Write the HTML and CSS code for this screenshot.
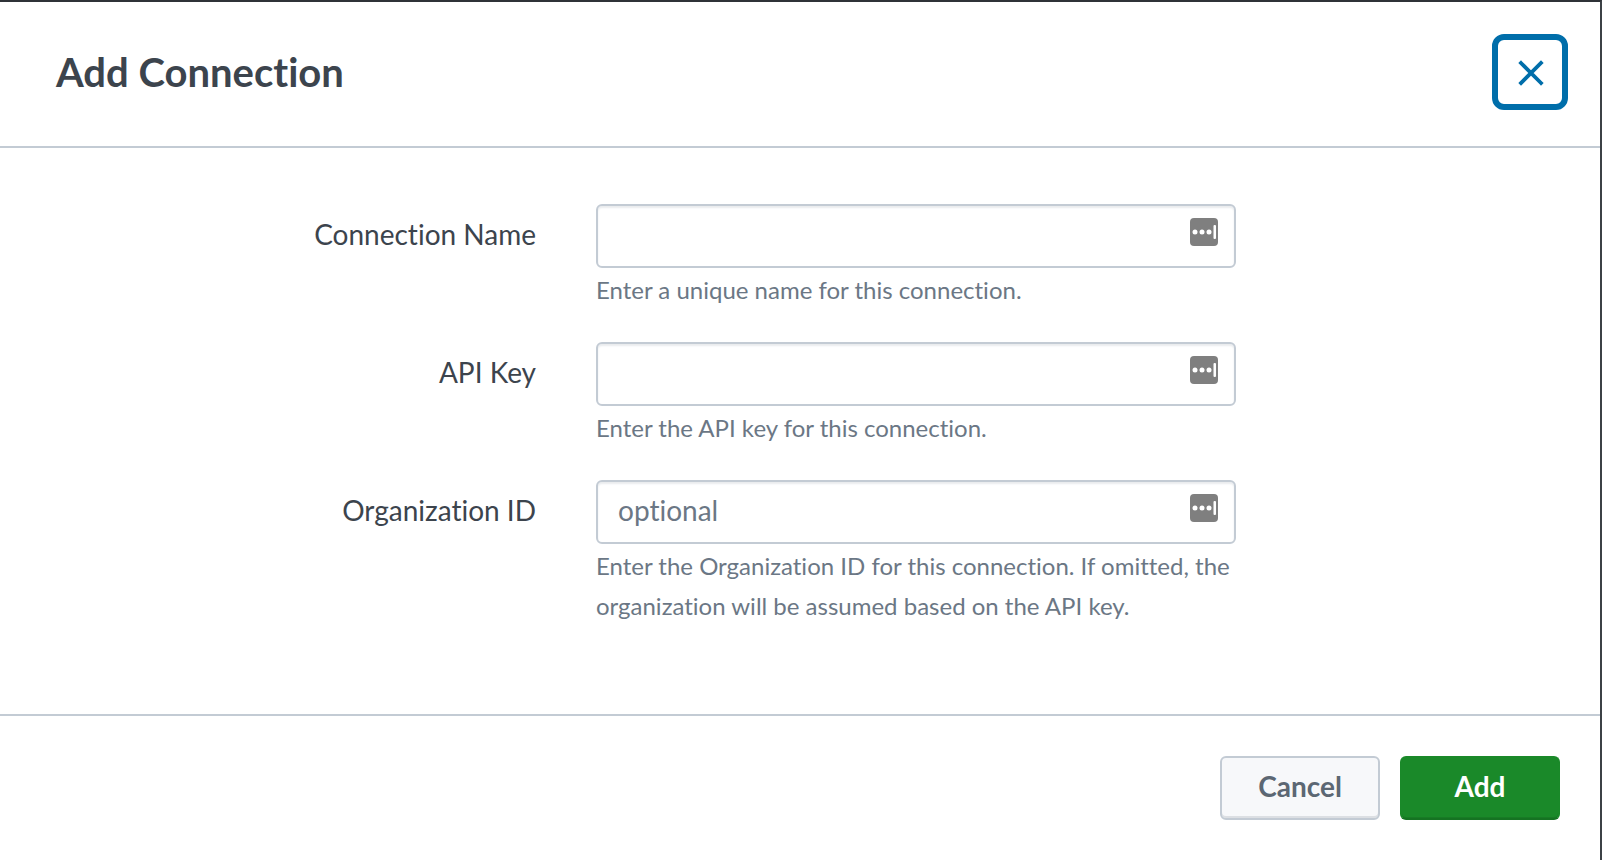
FILE: index.html
```html
<!DOCTYPE html>
<html lang="en">
<head>
<meta charset="utf-8">
<meta name="viewport" content="width=device-width, initial-scale=1">
<title>Add Connection</title>
<link rel="stylesheet" href="styles.css">
</head>
<body>
<form class="modal" aria-labelledby="modal-title">
  <header class="modal-header">
    <h1 class="modal-title" id="modal-title">Add Connection</h1>
    <button class="close" type="button" aria-label="Close">
      <svg class="close-icon" viewBox="0 0 26 26" aria-hidden="true"><path d="M3 3L23 23M23 3L3 23" fill="none" stroke="currentColor" stroke-width="3.800" stroke-linecap="square"/></svg>
    </button>
  </header>
  <main class="modal-body">
    <div class="field">
      <label class="label" for="name">Connection Name</label>
      <div class="control">
        <div class="input-wrap">
          <input class="input" id="name" type="text" aria-describedby="name-help">
          <svg class="fill-icon" viewBox="0 0 28 28" aria-hidden="true"><rect width="28" height="28" rx="4" fill="#7f7f7f"/><g fill="#fff"><circle cx="5" cy="14" r="2.500"/><circle cx="12" cy="14" r="2.500"/><circle cx="19" cy="14" r="2.500"/><rect x="23.500" y="7" width="2.500" height="14" rx="1"/></g></svg>
        </div>
        <p class="help" id="name-help">Enter a unique name for this connection.</p>
      </div>
    </div>
    <div class="field">
      <label class="label" for="key">API Key</label>
      <div class="control">
        <div class="input-wrap">
          <input class="input" id="key" type="text" aria-describedby="key-help">
          <svg class="fill-icon" viewBox="0 0 28 28" aria-hidden="true"><rect width="28" height="28" rx="4" fill="#7f7f7f"/><g fill="#fff"><circle cx="5" cy="14" r="2.500"/><circle cx="12" cy="14" r="2.500"/><circle cx="19" cy="14" r="2.500"/><rect x="23.500" y="7" width="2.500" height="14" rx="1"/></g></svg>
        </div>
        <p class="help" id="key-help">Enter the API key for this connection.</p>
      </div>
    </div>
    <div class="field">
      <label class="label" for="org">Organization ID</label>
      <div class="control">
        <div class="input-wrap">
          <input class="input" id="org" type="text" placeholder="optional" aria-describedby="org-help">
          <svg class="fill-icon" viewBox="0 0 28 28" aria-hidden="true"><rect width="28" height="28" rx="4" fill="#7f7f7f"/><g fill="#fff"><circle cx="5" cy="14" r="2.500"/><circle cx="12" cy="14" r="2.500"/><circle cx="19" cy="14" r="2.500"/><rect x="23.500" y="7" width="2.500" height="14" rx="1"/></g></svg>
        </div>
        <p class="help" id="org-help">Enter the Organization ID for this connection. If omitted, the organization will be assumed based on the API key.</p>
      </div>
    </div>
  </main>
  <footer class="modal-footer">
    <button class="button" type="button">Cancel</button>
    <button class="button button-primary" type="submit">Add</button>
  </footer>
</form>
</body>
</html>
```
FILE: styles.css
```css
* {
  box-sizing: border-box;
}

body {
  margin: 0;
  font-family: Lato, "Liberation Sans", sans-serif;
  font-size: 28px;
  font-variant-ligatures: none;
  color: #3c444d;
  background: #fff;
}

.modal {
  display: flex;
  flex-direction: column;
  min-height: 100vh;
  border-top: 2px solid #2f3338;
  border-right: 2px solid #3c4146;
}

.modal-header {
  display: flex;
  align-items: center;
  justify-content: space-between;
  padding: 32px 32px 36px 56px;
  border-bottom: 2px solid #c3cbd4;
}

.modal-title {
  margin: 0;
  font-size: 40px;
  line-height: 48px;
  font-weight: 700;
}

.close {
  display: flex;
  align-items: center;
  justify-content: center;
  width: 76px;
  height: 76px;
  padding: 2px 0 0 2px;
  color: #006eaa;
  background: #fff;
  border: 6px solid #006eaa;
  border-radius: 12px;
}

.close-icon {
  width: 26px;
  height: 26px;
}

.modal-body {
  display: flex;
  flex-direction: column;
  gap: 32px;
  padding: 56px 0 88px;
}

.field {
  display: grid;
  grid-template-columns: 33.5% 40%;
  column-gap: 60px;
}

.label {
  line-height: 60px;
  text-align: right;
}

.input-wrap {
  position: relative;
}

.input {
  display: block;
  width: 100%;
  height: 64px;
  padding: 0 64px 4px 20px;
  font: inherit;
  font-variant-ligatures: none;
  color: inherit;
  background: #fff;
  border: 2px solid #c3cbd4;
  border-radius: 6px;
  box-shadow: inset 0 2px 2px #e9ebee;
}

.input::placeholder {
  color: #6b7785;
  opacity: 1;
}

.fill-icon {
  position: absolute;
  top: 14px;
  right: 18px;
  width: 28px;
  height: 28px;
}

.help {
  margin: 2px 0 0;
  font-size: 24px;
  line-height: 40px;
  color: #6b7785;
}

.modal-footer {
  display: flex;
  justify-content: flex-end;
  gap: 20px;
  padding: 40px;
  border-top: 2px solid #c3cbd4;
}

.button {
  width: 160px;
  height: 64px;
  padding: 0 0 4px;
  font: inherit;
  font-weight: 700;
  color: #5c6773;
  background: #f7f8fa;
  border: 2px solid #c3cbd4;
  border-radius: 6px;
  box-shadow: inset 0 -2px 0 #dcdfe3;
}

.button-primary {
  color: #fff;
  background: #1a8929;
  border-color: #1a8929;
  border-bottom-color: #157322;
  box-shadow: inset 0 -1px 0 #177b25;
}
```
